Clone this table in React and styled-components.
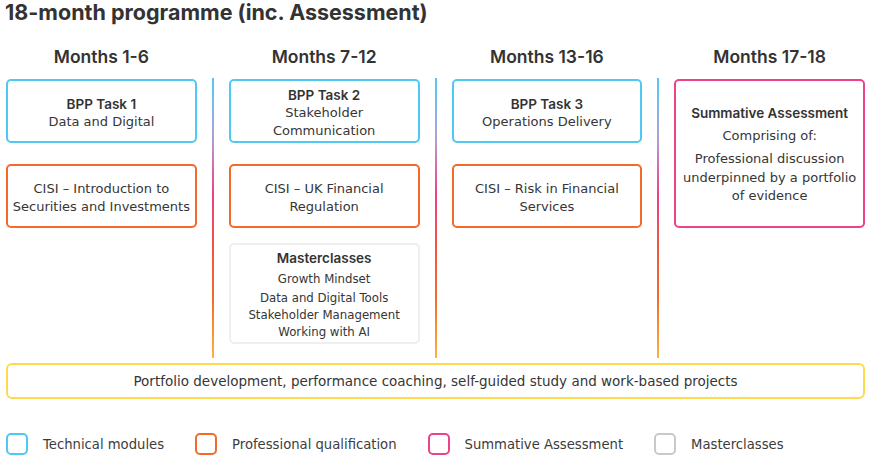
import React from "react";
import styled, { createGlobalStyle } from "styled-components";

const tones = {
  technical: "#4ec9f3",
  professional: "#f36a2c",
  summative: "#ec4388",
  masterclass: "#c9c9c9",
  faint: "#efefef",
  portfolio: "#ffda4f",
};

const GlobalStyle = createGlobalStyle`
  body {
    margin: 0;
    background: #fff;
    color: #363636;
    font-family: "DejaVu Sans", "Liberation Sans", sans-serif;
  }
`;

const Page = styled.div`
  width: 859px;
  padding: 0 15px 0 6px;
`;

const Title = styled.h1`
  margin: 0 0 0 -1px;
  font-family: Inter, "Liberation Sans", sans-serif;
  font-weight: 700;
  font-size: 21.5px;
  line-height: 24px;
  color: #333;
`;

const HeaderRow = styled.div`
  display: flex;
  gap: 32px;
  margin-top: 21px;
`;

const ColumnHeader = styled.h2`
  flex: 1;
  margin: 0;
  text-align: center;
  font-family: Inter, "Liberation Sans", sans-serif;
  font-weight: 600;
  font-size: 17.5px;
  line-height: 24px;
  color: #333;
`;

const BodyRow = styled.div`
  display: flex;
  gap: 15px;
  margin-top: 9px;
  height: 280px;
`;

const Stack = styled.div`
  flex: 1;
  display: flex;
  flex-direction: column;
  padding-top: 1px;
`;

const Divider = styled.div`
  width: 2px;
  flex: none;
  background: linear-gradient(
    to bottom,
    #55c7f3 0%,
    #6fc0ef 8%,
    #b59bd2 22%,
    #ee3f86 42%,
    #f0553f 60%,
    #f36a2c 78%,
    #fbb43c 100%
  );
`;

const Box = styled.div`
  box-sizing: border-box;
  height: ${(p) => p.$height}px;
  margin-top: ${(p) => p.$gap || 0}px;
  border: 2px solid ${(p) => tones[p.$tone]};
  border-radius: 5px;
  padding: ${(p) => (p.$tone === "faint" ? "5px 4px 3px" : "4px 4px 1px")};
  display: flex;
  flex-direction: column;
  justify-content: center;
  align-items: center;
  text-align: center;
  font-size: 13px;
  line-height: 18px;
`;

const BoxTitle = styled.div`
  font-family: Inter, "Liberation Sans", sans-serif;
  font-weight: 600;
  font-size: 13.5px;
  line-height: 18px;
  color: #333;
`;

const Para = styled.div`
  margin-top: ${(p) => p.$gap || 0}px;
  line-height: ${(p) => p.$lh || 18}px;
  font-size: ${(p) => p.$size || 13}px;
`;

const Portfolio = styled.div`
  box-sizing: border-box;
  margin-top: 5px;
  height: 36px;
  border: 2px solid ${tones.portfolio};
  border-radius: 6px;
  display: flex;
  align-items: center;
  justify-content: center;
  font-size: 13.5px;
`;

const Legend = styled.div`
  display: flex;
  align-items: center;
  gap: 31px;
  margin-top: 34px;
`;

const LegendItem = styled.div`
  display: flex;
  align-items: center;
  gap: 15px;
  font-size: 13.2px;
  color: #3c3c3c;
`;

const Swatch = styled.span`
  box-sizing: border-box;
  width: 22px;
  height: 22px;
  border: 2px solid ${(p) => tones[p.$tone]};
  border-radius: 5px;
`;

const columns = [
  {
    label: "Months 1-6",
    boxes: [
      { tone: "technical", height: 64, title: "BPP Task 1", lines: ["Data and Digital"] },
      {
        tone: "professional",
        height: 64,
        gap: 21,
        lines: ["CISI – Introduction to", "Securities and Investments"],
      },
    ],
  },
  {
    label: "Months 7-12",
    boxes: [
      { tone: "technical", height: 64, title: "BPP Task 2", lines: ["Stakeholder", "Communication"] },
      { tone: "professional", height: 64, gap: 21, lines: ["CISI – UK Financial", "Regulation"] },
      { masterclasses: true },
    ],
  },
  {
    label: "Months 13-16",
    boxes: [
      { tone: "technical", height: 64, title: "BPP Task 3", lines: ["Operations Delivery"] },
      { tone: "professional", height: 64, gap: 21, lines: ["CISI – Risk in Financial", "Services"] },
    ],
  },
  {
    label: "Months 17-18",
    boxes: [{ summative: true }],
  },
];

const legend = [
  { tone: "technical", label: "Technical modules" },
  { tone: "professional", label: "Professional qualification" },
  { tone: "summative", label: "Summative Assessment" },
  { tone: "masterclass", label: "Masterclasses" },
];

function Masterclasses() {
  return (
    <Box $tone="faint" $height={101} $gap={15}>
      <BoxTitle>Masterclasses</BoxTitle>
      <Para $size={11.75} $lh={17} $gap={4}>Growth Mindset</Para>
      <Para $size={11.75} $lh={17} $gap={2}>
        Data and Digital Tools
        <br />
        Stakeholder Management
        <br />
        Working with AI
      </Para>
    </Box>
  );
}

function Summative() {
  return (
    <Box $tone="summative" $height={149}>
      <BoxTitle>Summative Assessment</BoxTitle>
      <Para $gap={5}>Comprising of:</Para>
      <Para $gap={5} $lh={18.5}>
        Professional discussion
        <br />
        underpinned by a portfolio
        <br />
        of evidence
      </Para>
    </Box>
  );
}

function ModuleBox({ box }) {
  if (box.masterclasses) return <Masterclasses />;
  if (box.summative) return <Summative />;
  return (
    <Box $tone={box.tone} $height={box.height} $gap={box.gap}>
      {box.title && <BoxTitle>{box.title}</BoxTitle>}
      <Para>
        {box.lines.map((line, i) => (
          <React.Fragment key={line}>
            {i > 0 && <br />}
            {line}
          </React.Fragment>
        ))}
      </Para>
    </Box>
  );
}

function App() {
  return (
    <>
      <GlobalStyle />
      <Page>
        <Title>18-month programme (inc. Assessment)</Title>
        <HeaderRow>
          {columns.map((col) => (
            <ColumnHeader key={col.label}>{col.label}</ColumnHeader>
          ))}
        </HeaderRow>
        <BodyRow>
          {columns.map((col, i) => (
            <React.Fragment key={col.label}>
              {i > 0 && <Divider />}
              <Stack>
                {col.boxes.map((box, j) => (
                  <ModuleBox key={j} box={box} />
                ))}
              </Stack>
            </React.Fragment>
          ))}
        </BodyRow>
        <Portfolio>
          Portfolio development, performance coaching, self-guided study and work-based projects
        </Portfolio>
        <Legend>
          {legend.map((item) => (
            <LegendItem key={item.tone}>
              <Swatch $tone={item.tone} />
              {item.label}
            </LegendItem>
          ))}
        </Legend>
      </Page>
    </>
  );
}

export default App;
